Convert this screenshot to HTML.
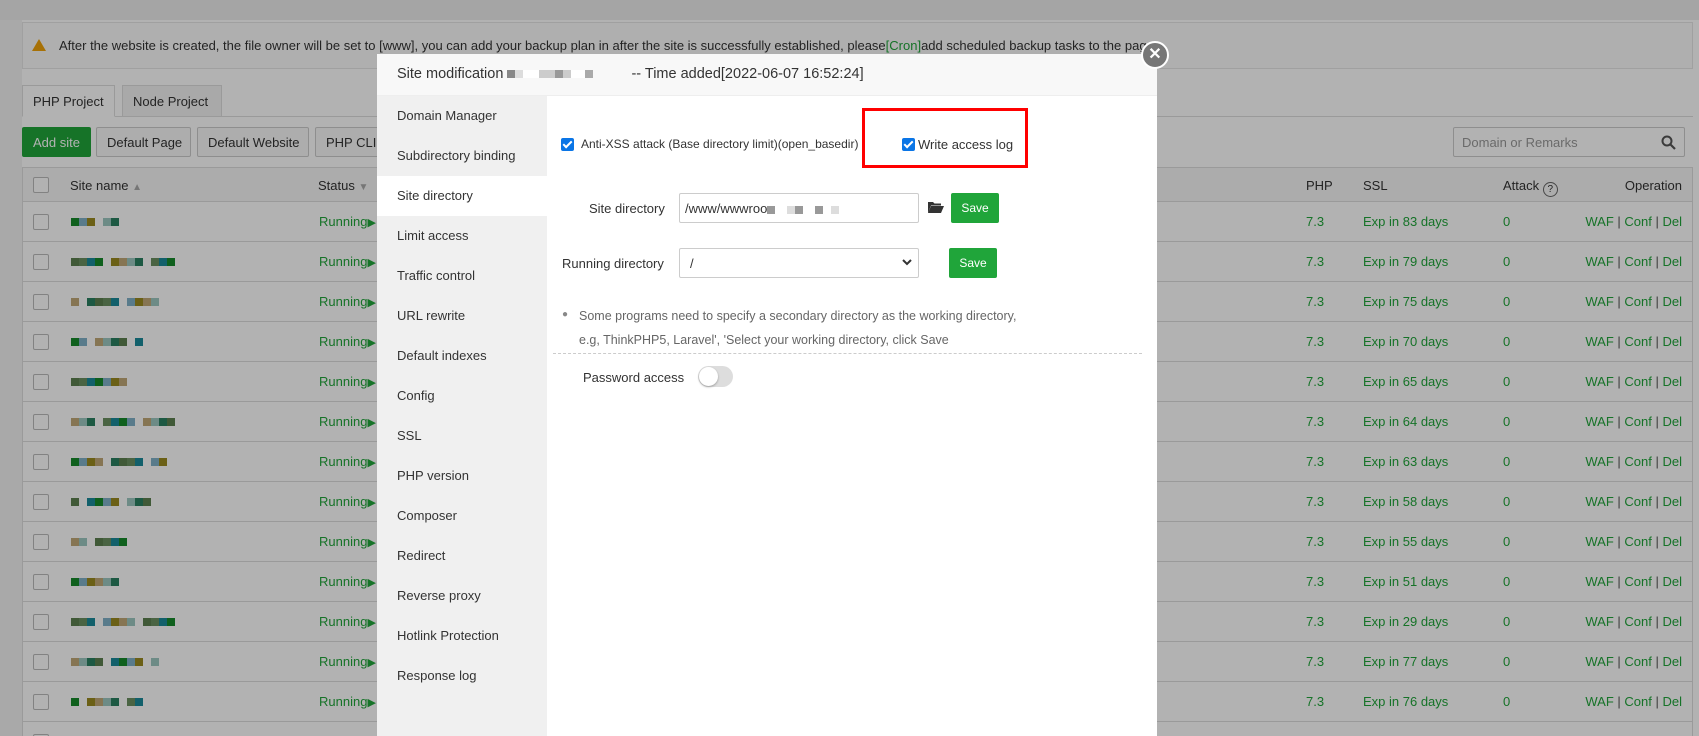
<!DOCTYPE html>
<html><head><meta charset="utf-8"><style>
*{box-sizing:border-box;margin:0;padding:0}
html,body{width:1699px;height:736px;overflow:hidden}
body{background:#fff;font-family:"Liberation Sans","Microsoft YaHei",sans-serif;font-size:13px;color:#333}
#wrap{position:relative;width:1699px;height:736px;overflow:hidden}
.abs{position:absolute}
.top{left:0;top:0;width:1699px;height:20px;background:#ededed}
.lstrip{left:0;top:20px;width:22px;height:716px;background:#f3f3f3}
.notice{left:22px;top:22px;width:1671px;height:47px;border:1px solid #e6e6e6;background:#fbfbfb;padding:15px 0 0 36px;white-space:nowrap;overflow:hidden;font-size:13px}
.tri{left:32px;top:39px;width:0;height:0;border-left:7px solid transparent;border-right:7px solid transparent;border-bottom:12px solid #f0a30a}
.tab{top:85px;height:32px;border:1px solid #ddd;padding:8px 10px;font-size:13px}
.tabline{left:22px;top:116px;width:1671px;height:1px;background:#ddd}
.btn{top:127px;height:30px;border:1px solid #ccc;border-radius:2px;background:#f8f8f8;padding:7px 10px;font-size:13px;white-space:nowrap}
.search{left:1453px;top:127px;width:232px;height:30px;border:1px solid #ccc;border-radius:2px;padding:7px 8px;color:#999;background:#fff}
.tbl{left:22px;top:167px;width:1671px;height:580px;border:1px solid #ddd}
.th{left:23px;top:168px;width:1669px;height:34px;background:#f6f6f6;border-bottom:1px solid #ddd}
.row{left:23px;width:1669px;height:40px;border-bottom:1px solid #ddd}
.cb{width:16px;height:16px;border:1px solid #bbb;border-radius:2px;background:#fff}
.g{color:#20a53a}
.ov{left:0;top:0;width:1699px;height:736px;background:rgba(0,0,0,0.3)}
.modal{left:377px;top:54px;width:780px;height:682px;background:#fff;overflow:hidden}
.mh{left:0;top:0;width:780px;height:42px;background:#f8f8f8;border-bottom:1px solid #eee;padding:12px 20px;font-size:14.5px;color:#333;white-space:nowrap}
.side{left:0;top:42px;width:170px;height:660px;background:#f0f0f0}
.si{left:0;width:170px;height:40px;padding:12px 0 0 20px;font-size:13px;color:#333}
.chk{width:13px;height:13px;background:#0a75e6;border-radius:2px}
.chk:after{content:"";position:absolute;left:4px;top:1px;width:3px;height:7px;border:solid #fff;border-width:0 2px 2px 0;transform:rotate(45deg)}
.inp{height:30px;border:1px solid #ccc;border-radius:2px;background:#fff;padding:7px 5px;font-size:13px}
.save{height:30px;width:48px;background:#20a53a;color:#fff;border-radius:2px;text-align:center;padding-top:8px;font-size:12px}
.px{display:inline-block;width:8px;height:8px;vertical-align:top}
</style></head><body><div id="wrap">
<div class="abs top"></div><div class="abs lstrip"></div>
<div class="abs notice">After the website is created, the file owner will be set to [www], you can add your backup plan in after the site is successfully established, please<span class="g">[Cron]</span>add scheduled backup tasks to the page</div>
<div class="abs tri"></div>
<div class="abs tabline"></div>
<div class="abs tab" style="left:22px;width:93px;background:#fff;border-bottom-color:#fff">PHP Project</div>
<div class="abs tab" style="left:122px;width:100px;background:#f2f2f2">Node Project</div>
<div class="abs btn" style="left:22px;width:69px;background:#20a53a;color:#fff;border-color:#20a53a">Add site</div>
<div class="abs btn" style="left:96px;width:95px">Default Page</div>
<div class="abs btn" style="left:197px;width:112px">Default Website</div>
<div class="abs btn" style="left:315px;width:80px">PHP CLI v</div>
<div class="abs search">Domain or Remarks<svg style="position:absolute;right:8px;top:7px" width="15" height="15" viewBox="0 0 15 15"><circle cx="6" cy="6" r="4.5" fill="none" stroke="#555" stroke-width="2"/><path d="M9.5 9.5L14 14" stroke="#555" stroke-width="2.2"/></svg></div>
<div class="abs tbl"></div>
<div class="abs th"></div>
<div class="abs cb" style="left:33px;top:177px"></div>
<div class="abs" style="left:70px;top:178px">Site name <span style="color:#aaa;font-size:10px">▲</span></div>
<div class="abs" style="left:318px;top:178px">Status <span style="color:#aaa;font-size:10px">▼</span></div>
<div class="abs" style="left:1306px;top:178px">PHP</div>
<div class="abs" style="left:1363px;top:178px">SSL</div>
<div class="abs" style="left:1503px;top:178px">Attack <span style="display:inline-block;width:15px;height:15px;border:1px solid #666;border-radius:50%;font-size:10px;text-align:center;line-height:13px;vertical-align:-2px">?</span></div>
<div class="abs" style="left:1600px;top:178px;width:82px;text-align:right">Operation</div>

<div id="rows"></div>
<script>
var days=[83,79,75,70,65,64,63,58,55,51,29,77,76,74];
var cols=["#168a2a","#9a8a20","#9cc8c0","#5c8050","#1a8a9a","#80b0c8","#c0a878","#2a8060","#6a9060"];
var h="";
for(var i=0;i<14;i++){var y=202+i*40;
h+='<div class="abs row" style="top:'+y+'px"></div>';
h+='<div class="abs cb" style="left:33px;top:'+(y+12)+'px"></div>';
var b='';var n=6+((i*7)%9);for(var k=0;k<n;k++){var c=cols[(i*3+k*5)%9];b+='<span class="px" style="background:'+((k*i+k)%5==3?'transparent':c)+'"></span>';}
h+='<div class="abs" style="left:71px;top:'+(y+16)+'px;white-space:nowrap;line-height:0">'+b+'</div>';
h+='<div class="abs g" style="left:319px;top:'+(y+12)+'px">Running<span style="font-size:11px">&#9654;</span></div>';
h+='<div class="abs g" style="left:1306px;top:'+(y+12)+'px">7.3</div>';
h+='<div class="abs g" style="left:1363px;top:'+(y+12)+'px">Exp in '+days[i]+' days</div>';
h+='<div class="abs g" style="left:1503px;top:'+(y+12)+'px">0</div>';
h+='<div class="abs g" style="left:1582px;top:'+(y+12)+'px;width:100px;text-align:right">WAF <span style="color:#555">|</span> Conf <span style="color:#555">|</span> Del</div>';}
document.getElementById("rows").innerHTML=h;
</script>

<div class="abs ov"></div>

<div class="abs modal">
 <div class="abs mh">Site modification <span style="display:inline-block;width:120px;vertical-align:middle;line-height:0"><span class="px" style="background:#888"></span><span class="px" style="background:#ddd"></span><span class="px" style="width:16px;background:#fff"></span><span class="px" style="width:16px;background:#ccc"></span><span class="px" style="background:#999"></span><span class="px" style="background:#ccc"></span><span class="px" style="width:14px;background:#fff"></span><span class="px" style="background:#aaa"></span></span> -- Time added[2022-06-07 16:52:24]</div>
 <div class="abs side"></div>
 <div class="abs si" style="top:42px">Domain Manager</div>
 <div class="abs si" style="top:82px">Subdirectory binding</div>
 <div class="abs si" style="top:122px;background:#fff">Site directory</div>
 <div class="abs si" style="top:162px">Limit access</div>
 <div class="abs si" style="top:202px">Traffic control</div>
 <div class="abs si" style="top:242px">URL rewrite</div>
 <div class="abs si" style="top:282px">Default indexes</div>
 <div class="abs si" style="top:322px">Config</div>
 <div class="abs si" style="top:362px">SSL</div>
 <div class="abs si" style="top:402px">PHP version</div>
 <div class="abs si" style="top:442px">Composer</div>
 <div class="abs si" style="top:482px">Redirect</div>
 <div class="abs si" style="top:522px">Reverse proxy</div>
 <div class="abs si" style="top:562px">Hotlink Protection</div>
 <div class="abs si" style="top:602px">Response log</div>

 <div class="abs chk" style="left:184px;top:84px"></div>
 <div class="abs" style="left:204px;top:83px;white-space:nowrap;font-size:12px">Anti-XSS attack (Base directory limit)(open_basedir)</div>
 <div class="abs chk" style="left:525px;top:84px"></div>
 <div class="abs" style="left:539px;top:83px;background:#fff;padding-left:2px">Write access log</div>
 <div class="abs" style="left:485px;top:54px;width:166px;height:60px;border:3px solid #f00"></div>

 <div class="abs" style="left:212px;top:147px">Site directory</div>
 <div class="abs inp" style="left:302px;top:139px;width:240px">/www/wwwroo<span style="display:inline-block;width:120px;line-height:0;vertical-align:middle"><span class="px" style="background:#999"></span><span class="px" style="width:12px;background:#fff"></span><span class="px" style="background:#ddd"></span><span class="px" style="background:#999"></span><span class="px" style="width:12px;background:#fff"></span><span class="px" style="background:#999"></span><span class="px" style="width:8px;background:#fff"></span><span class="px" style="background:#ddd"></span></span></div>
 <svg class="abs" style="left:551px;top:146px" width="16" height="14" viewBox="0 0 16 14"><path d="M0 2h5l1.5 1.5H13v2H3L0 13z" fill="#333"/><path d="M3 6h13l-3 7H0z" fill="#333"/></svg>
 <div class="abs save" style="left:574px;top:139px">Save</div>

 <div class="abs" style="left:185px;top:202px">Running directory</div>
 <div class="abs inp" style="left:302px;top:194px;width:240px;padding-left:10px">/<svg style="position:absolute;right:6px;top:10px" width="10" height="7" viewBox="0 0 10 7"><path d="M1 1l4 4 4-4" fill="none" stroke="#333" stroke-width="2"/></svg></div>
 <div class="abs save" style="left:572px;top:194px">Save</div>

 <div class="abs" style="left:185px;top:255px;color:#888;font-size:10px">●</div>
 <div class="abs" style="left:202px;top:250px;color:#666;font-size:12.5px;line-height:24px;white-space:nowrap">Some programs need to specify a secondary directory as the working directory,<br>e.g, ThinkPHP5, Laravel', 'Select your working directory, click Save</div>
 <div class="abs" style="left:176px;top:299px;width:589px;border-top:1px dashed #ccc"></div>
 <div class="abs" style="left:206px;top:316px">Password access</div>
 <div class="abs" style="left:321px;top:312px;width:35px;height:21px;border-radius:11px;background:#ddd"><div style="position:absolute;left:1px;top:1px;width:19px;height:19px;border-radius:50%;background:#fff;box-shadow:0 1px 2px rgba(0,0,0,.3)"></div></div>
</div>
<div class="abs" style="left:1141px;top:41px;width:28px;height:28px;border-radius:50%;background:#777;border:2px solid #fff;color:#fff;font-size:16px;text-align:center;line-height:23px;font-weight:bold">✕</div>
</div></body></html>
